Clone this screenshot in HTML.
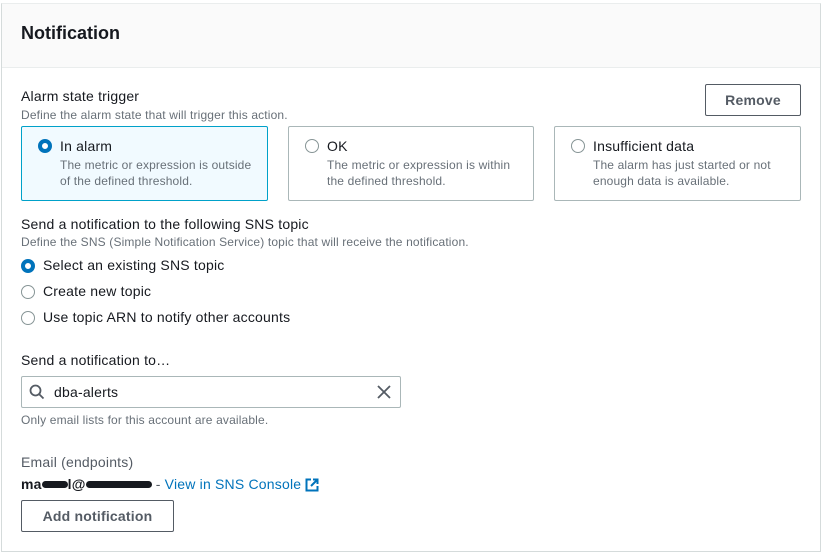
<!DOCTYPE html>
<html><head><style>
body{margin:0;width:822px;height:556px;background:#fff;font-family:"Liberation Sans",sans-serif;color:#16191f;position:relative;overflow:hidden}
.a{position:absolute;white-space:nowrap}
.panel{position:absolute;left:1px;top:3px;width:818px;height:547px;border:1px solid #d5dbdb;border-top:1px solid #eaeded}
.hdr{position:absolute;left:0;top:0;width:818px;height:63px;background:#fafafa;border-bottom:1px solid #eaeded}
.l{font-size:14px;color:#16191f;letter-spacing:0.2px}
.d{font-size:12px;color:#687078;letter-spacing:0.15px}
.tile{position:absolute;top:126px;height:75px;border:1px solid #aab7b8;border-radius:2px;box-sizing:border-box}
.rad{position:absolute;width:14px;height:14px;border-radius:50%;box-sizing:border-box;border:1.5px solid #879596;background:#fff}
.rad.on{border:4px solid #0073bb}
.btn{position:absolute;border:1px solid #545b64;border-radius:2px;box-sizing:border-box;font-weight:bold;font-size:14px;color:#545b64;text-align:center;background:#fff;letter-spacing:0.2px}
.red{display:inline-block;height:7px;background:#16191f;border-radius:4px;vertical-align:1px}
</style></head><body>
<div class="panel"><div class="hdr"></div></div>
<div class="a" style="left:21px;top:23px;font-size:18px;font-weight:bold">Notification</div>
<div class="a l" style="left:21px;top:88px">Alarm state trigger</div>
<div class="a d" style="left:21px;top:108px">Define the alarm state that will trigger this action.</div>
<div class="btn" style="left:705px;top:84px;width:96px;height:32px;line-height:30px">Remove</div>

<div class="tile" style="left:21px;width:247px;border-color:#00a1c9;background:#f1faff"></div>
<div class="rad on" style="left:38px;top:139px"></div>
<div class="a l" style="left:60px;top:138px">In alarm</div>
<div class="a d" style="left:60px;top:157px;line-height:16px">The metric or expression is outside<br>of the defined threshold.</div>

<div class="tile" style="left:288px;width:246px"></div>
<div class="rad" style="left:305px;top:139px"></div>
<div class="a l" style="left:327px;top:138px">OK</div>
<div class="a d" style="left:327px;top:157px;line-height:16px">The metric or expression is within<br>the defined threshold.</div>

<div class="tile" style="left:554px;width:247px"></div>
<div class="rad" style="left:571px;top:139px"></div>
<div class="a l" style="left:593px;top:138px">Insufficient data</div>
<div class="a d" style="left:593px;top:157px;line-height:16px">The alarm has just started or not<br>enough data is available.</div>

<div class="a l" style="left:21px;top:216px">Send a notification to the following SNS topic</div>
<div class="a d" style="left:21px;top:235px">Define the SNS (Simple Notification Service) topic that will receive the notification.</div>
<div class="rad on" style="left:21px;top:259px"></div>
<div class="a l" style="left:43px;top:257px">Select an existing SNS topic</div>
<div class="rad" style="left:21px;top:285px"></div>
<div class="a l" style="left:43px;top:283px">Create new topic</div>
<div class="rad" style="left:21px;top:311px"></div>
<div class="a l" style="left:43px;top:309px">Use topic ARN to notify other accounts</div>

<div class="a l" style="left:21px;top:352px">Send a notification to…</div>
<div style="position:absolute;left:21px;top:376px;width:380px;height:32px;border:1px solid #aab7b8;border-radius:2px;box-sizing:border-box"></div>
<svg class="a" style="left:29px;top:384px" width="16" height="16" viewBox="0 0 16 16"><circle cx="6.5" cy="6.5" r="5" fill="none" stroke="#545b64" stroke-width="1.8"/><path d="M10 10l4.5 4.5" stroke="#545b64" stroke-width="1.8"/></svg>
<div class="a l" style="left:54px;top:384px">dba-alerts</div>
<svg class="a" style="left:377px;top:385px" width="14" height="14" viewBox="0 0 14 14"><path d="M1 1l12 12M13 1L1 13" stroke="#545b64" stroke-width="1.8"/></svg>
<div class="a d" style="left:21px;top:413px">Only email lists for this account are available.</div>

<div class="a l" style="left:21px;top:454px;color:#545b64">Email (endpoints)</div>
<div class="a l" style="left:21px;top:476px;font-weight:bold">ma<span class="red" style="width:26px"></span>l@<span class="red" style="width:66px"></span> <span style="font-weight:normal;color:#545b64">-</span> <span style="font-weight:normal;color:#0073bb">View in SNS Console</span></div>
<svg class="a" style="left:305px;top:478px" width="14" height="14" viewBox="0 0 14 14"><path d="M6 1.5H1.5v11h11V8" fill="none" stroke="#0073bb" stroke-width="2"/><path d="M8 1.5h4.5V6M12.5 1.5L6 8" fill="none" stroke="#0073bb" stroke-width="2"/></svg>
<div class="btn" style="left:21px;top:500px;width:153px;height:32px;line-height:30px">Add notification</div>
</body></html>
